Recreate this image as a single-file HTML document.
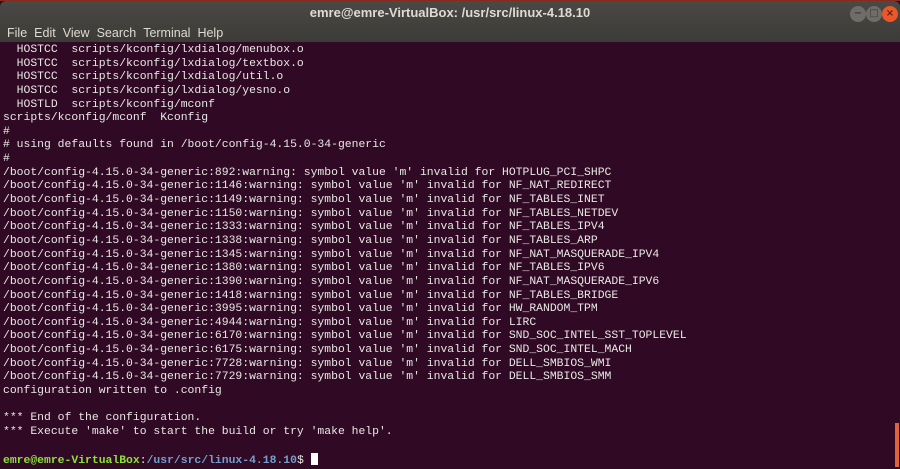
<!DOCTYPE html>
<html><head><meta charset="utf-8"><style>
html,body{margin:0;padding:0;width:900px;height:467px;overflow:hidden;background:#300a24}
.win{position:absolute;left:0;top:0;width:900px;height:467px;background:#300a24;border-top:1px solid #8a2a1e;box-sizing:border-box}
.bar{position:absolute;left:0;top:0;width:900px;height:41px;background:linear-gradient(#4a4945,#3c3b37);border-radius:6px 6px 0 0}
.title{position:absolute;top:4px;left:0;width:900px;text-align:center;font:bold 13px "Liberation Sans",sans-serif;color:#dfdbd2}
.menu{position:absolute;top:25px;left:7px;font:12.5px "Liberation Sans",sans-serif;color:#dfdbd2;word-spacing:2px}
.menu span{margin-right:7px}
.btn{position:absolute;top:5px;width:16px;height:16px;border-radius:50%;background:#6e6d68;color:#3c3b37;font:bold 10px/16px "DejaVu Sans",sans-serif;text-align:center}
.term{position:absolute;left:3px;top:43px;font:11.4px/13.64px "Liberation Mono",monospace;color:#e8e8e4;white-space:pre;margin:0}
.g{color:#8ae234;font-weight:bold}.b{color:#729fcf;font-weight:bold}
.cur{display:inline-block;width:7px;height:12px;background:#fff;vertical-align:-2px}
.sb{position:absolute;left:895px;top:422px;width:4px;height:44px;background:#e0643a}
</style></head><body><div class="win">
<div class="bar"><div class="title">emre@emre-VirtualBox: /usr/src/linux-4.18.10</div>
<div class="menu"><span>File</span><span>Edit</span><span>View</span><span>Search</span><span>Terminal</span><span>Help</span></div>
<div class="btn" style="left:850px">−</div><div class="btn" style="left:866px">□</div><div class="btn" style="left:882px;background:#e9572b;color:#5a2010">×</div></div>
<pre class="term">  HOSTCC  scripts/kconfig/lxdialog/menubox.o
  HOSTCC  scripts/kconfig/lxdialog/textbox.o
  HOSTCC  scripts/kconfig/lxdialog/util.o
  HOSTCC  scripts/kconfig/lxdialog/yesno.o
  HOSTLD  scripts/kconfig/mconf
scripts/kconfig/mconf  Kconfig
#
# using defaults found in /boot/config-4.15.0-34-generic
#
/boot/config-4.15.0-34-generic:892:warning: symbol value 'm' invalid for HOTPLUG_PCI_SHPC
/boot/config-4.15.0-34-generic:1146:warning: symbol value 'm' invalid for NF_NAT_REDIRECT
/boot/config-4.15.0-34-generic:1149:warning: symbol value 'm' invalid for NF_TABLES_INET
/boot/config-4.15.0-34-generic:1150:warning: symbol value 'm' invalid for NF_TABLES_NETDEV
/boot/config-4.15.0-34-generic:1333:warning: symbol value 'm' invalid for NF_TABLES_IPV4
/boot/config-4.15.0-34-generic:1338:warning: symbol value 'm' invalid for NF_TABLES_ARP
/boot/config-4.15.0-34-generic:1345:warning: symbol value 'm' invalid for NF_NAT_MASQUERADE_IPV4
/boot/config-4.15.0-34-generic:1380:warning: symbol value 'm' invalid for NF_TABLES_IPV6
/boot/config-4.15.0-34-generic:1390:warning: symbol value 'm' invalid for NF_NAT_MASQUERADE_IPV6
/boot/config-4.15.0-34-generic:1418:warning: symbol value 'm' invalid for NF_TABLES_BRIDGE
/boot/config-4.15.0-34-generic:3995:warning: symbol value 'm' invalid for HW_RANDOM_TPM
/boot/config-4.15.0-34-generic:4944:warning: symbol value 'm' invalid for LIRC
/boot/config-4.15.0-34-generic:6170:warning: symbol value 'm' invalid for SND_SOC_INTEL_SST_TOPLEVEL
/boot/config-4.15.0-34-generic:6175:warning: symbol value 'm' invalid for SND_SOC_INTEL_MACH
/boot/config-4.15.0-34-generic:7728:warning: symbol value 'm' invalid for DELL_SMBIOS_WMI
/boot/config-4.15.0-34-generic:7729:warning: symbol value 'm' invalid for DELL_SMBIOS_SMM
configuration written to .config

*** End of the configuration.
*** Execute 'make' to start the build or try 'make help'.

<span class="g">emre@emre-VirtualBox</span>:<span class="b">/usr/src/linux-4.18.10</span>$ <span class="cur"></span></pre>
<div class="sb"></div>
</div></body></html>
